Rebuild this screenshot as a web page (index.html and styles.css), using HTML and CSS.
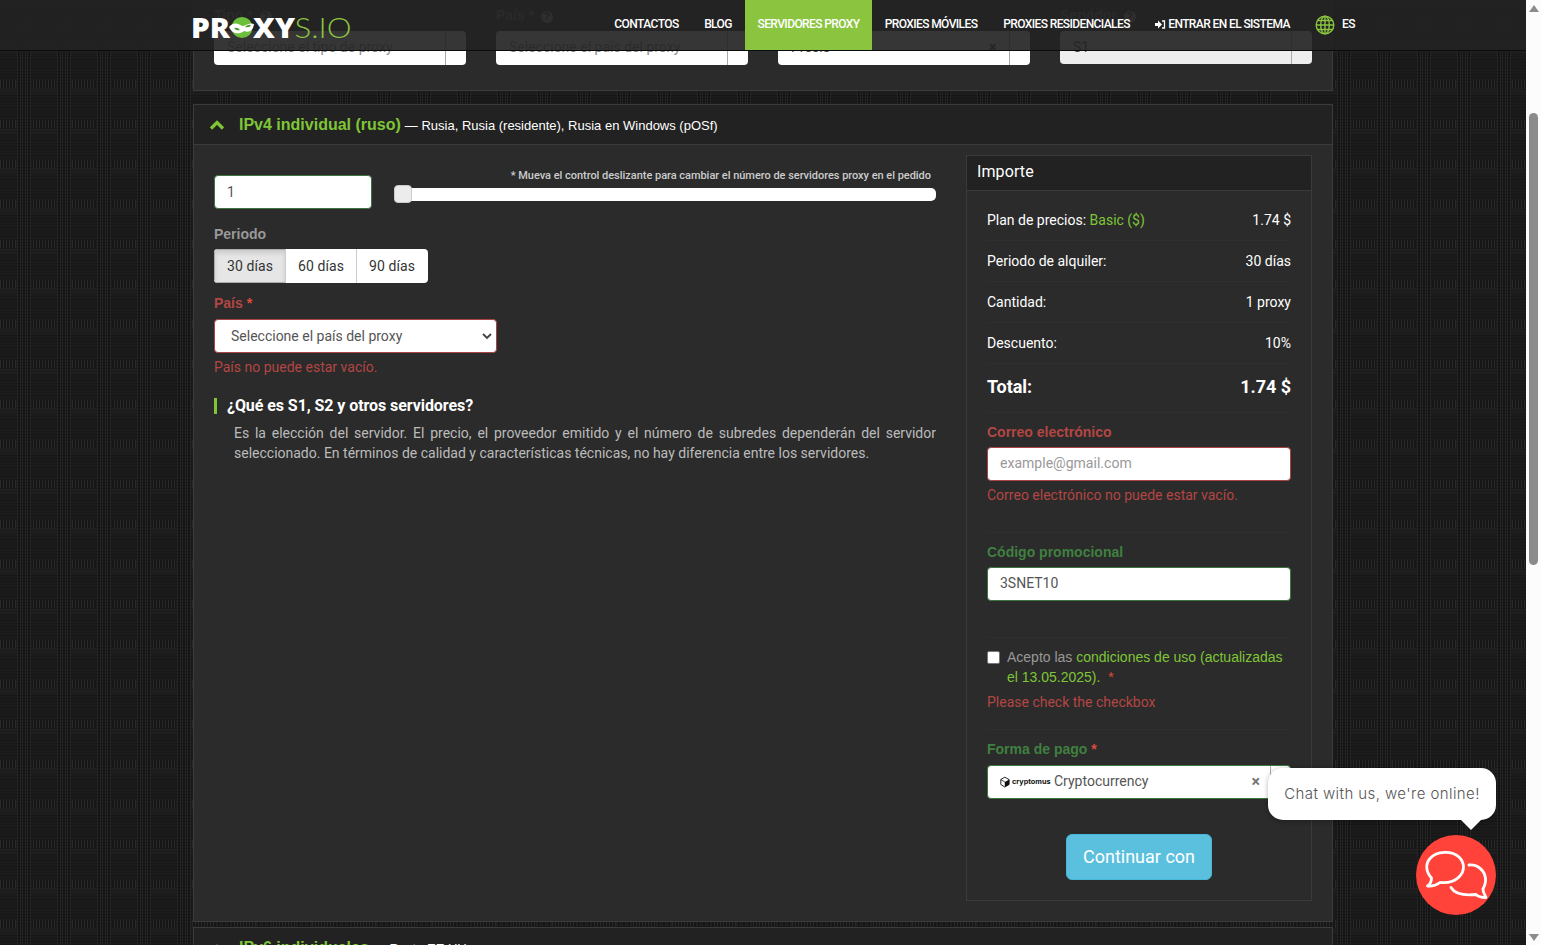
FILE: index.html
```html
<!DOCTYPE html>
<html lang="es">
<head>
<meta charset="utf-8">
<title>PROXYS.IO</title>
<link rel="stylesheet" href="styles.css">
</head>
<body>
<div class="viewport">
  <header class="navbar">
    <div class="navbar-inner">
      <svg class="logo" width="160" height="28" viewBox="0 0 160 28">
        <text class="logo-bold" x="-1" y="24.500" textLength="39" lengthAdjust="spacingAndGlyphs">PR</text>
        <circle cx="50" cy="14.500" r="10.500" fill="#6cbf3a"/>
        <path d="M37 14c4-5 9-4 13-1 4 0 7-4 12-2-1 7-5 9-10 7-5 4-12 3-15-4z" fill="#fff"/>
        <path d="M42 15q4-1 6 2-4 1-6-2zM53 14q3-3 6-2-1 3-6 2z" fill="#4a9a2a"/>
        <text class="logo-bold" x="61" y="24.500" textLength="42" lengthAdjust="spacingAndGlyphs">XY</text>
        <text class="logo-thin" x="102.500" y="24.500" textLength="57" lengthAdjust="spacingAndGlyphs">S.IO</text>
      </svg>
      <nav class="menu">
        <a class="m1">CONTACTOS</a><a class="m2">BLOG</a><a class="m3 active">SERVIDORES PROXY</a><a class="m4">PROXIES MÓVILES</a><a class="m5">PROXIES RESIDENCIALES</a><a class="m6"><svg width="11" height="9" viewBox="0 0 11 9"><path d="M0 3h3V.5L7 4.500 3 8.500V6H0z" fill="#fff"/><path d="M7 1h2.500v7H7" fill="none" stroke="#fff" stroke-width="1.300"/></svg>ENTRAR EN EL SISTEMA</a>
        <a class="lang"><svg width="20" height="20" viewBox="0 0 20 20" fill="none" stroke="#8bc53f" stroke-width="1.400"><circle cx="10" cy="10" r="8.800"/><ellipse cx="10" cy="10" rx="4.300" ry="8.800"/><path d="M10 1v18M1 10h18M2.500 5.500h15M2.500 14.500h15"/></svg>ES</a>
      </nav>
    </div>
  </header>

  <main class="container">
    <section class="panel filters">
      <div class="filter"><label>Tipo * <i>?</i></label><div class="combo"><span>Seleccione el tipo de proxy</span><b></b></div></div>
      <div class="filter"><label>País * <i>?</i></label><div class="combo"><span>Seleccione el país del proxy</span><b></b></div></div>
      <div class="filter"><label>&nbsp;</label><div class="combo dark"><span>Precio</span><em>×</em><b></b></div></div>
      <div class="filter"><label>Servidor <i>?</i></label><div class="combo off dark"><span>S1</span><b></b></div></div>
    </section>

    <section class="panel product">
      <div class="panel-head">
        <svg class="chevron" width="16" height="10" viewBox="0 0 16 10"><path d="M2 8.500L8 2.500l6 6" fill="none" stroke="#7fc637" stroke-width="3.200"/></svg>
        <strong>IPv4 individual (ruso)</strong><span>— Rusia, Rusia (residente), Rusia en Windows (pOSf)</span>
      </div>
      <div class="panel-body">
        <div class="config">
          <div class="qty-row">
            <div class="input qty">1</div>
            <div class="slider-box">
              <p class="slider-note">* Mueva el control deslizante para cambiar el número de servidores proxy en el pedido</p>
              <div class="slider"><span class="handle"></span></div>
            </div>
          </div>
          <div class="label muted">Periodo</div>
          <div class="btn-group"><span class="on">30 días</span><span>60 días</span><span>90 días</span></div>
          <div class="label red country">País <i>*</i></div>
          <div class="input select bad">Seleccione el país del proxy<svg width="10" height="7" viewBox="0 0 10 7"><path d="M1 1l4 4 4-4" fill="none" stroke="#444" stroke-width="1.900"/></svg></div>
          <div class="error">País no puede estar vacío.</div>
          <h4 class="question">¿Qué es S1, S2 y otros servidores?</h4>
          <p class="answer">Es la elección del servidor. El precio, el proveedor emitido y el número de subredes dependerán del servidor seleccionado. En términos de calidad y características técnicas, no hay diferencia entre los servidores.</p>
        </div>
        <aside class="summary">
          <h3>Importe</h3>
          <div class="summary-body">
            <div class="row"><span>Plan de precios: <a>Basic ($)</a></span><span>1.74 $</span></div>
            <div class="row"><span>Periodo de alquiler:</span><span>30 días</span></div>
            <div class="row"><span>Cantidad:</span><span>1 proxy</span></div>
            <div class="row"><span>Descuento:</span><span>10%</span></div>
            <div class="row total"><span>Total:</span><span>1.74 $</span></div>
            <div class="group email"><div class="label red">Correo electrónico</div><div class="input bad placeholder">example@gmail.com</div><div class="error">Correo electrónico no puede estar vacío.</div></div>
            <div class="group promo"><div class="label green">Código promocional</div><div class="input good">3SNET10</div></div>
            <div class="group terms"><div class="check"><span class="box"></span><p>Acepto las <a>condiciones de uso (actualizadas<br>el 13.05.2025).</a> <i>*</i></p></div><div class="error">Please check the checkbox</div></div>
            <div class="group pay"><div class="label green">Forma de pago <i>*</i></div>
              <div class="input good pay-select"><svg width="51" height="12" viewBox="0 0 51 12"><path d="M.8 3.500L4.800 1.200 9 3.500v5L4.800 11 .8 8.500z" fill="none" stroke="#111" stroke-width=".9"/><path d="M4.800 6L9.300 3.500v5L4.800 11z" fill="#111"/><path d="M.8 3.500L4.800 6" stroke="#111" stroke-width=".8"/><text class="crypto" x="12" y="8.300" textLength="38.500" lengthAdjust="spacingAndGlyphs">cryptomus</text></svg><span>Cryptocurrency</span><em>×</em><b></b></div></div>
            <button class="submit">Continuar con</button>
          </div>
        </aside>
      </div>
    </section>

    <section class="panel next">
      <div class="panel-head">
        <svg class="chevron" width="16" height="10" viewBox="0 0 16 10"><path d="M2 8.500L8 2.500l6 6" fill="none" stroke="#7fc637" stroke-width="3.200"/></svg>
        <strong>IPv6 individuales</strong><span>— Resto EE.UU.</span>
      </div>
    </section>
  </main>

  <div class="chat-bubble">Chat with us, we're online!</div>
  <div class="chat-button"><svg width="80" height="80" viewBox="0 0 80 80" fill="none" stroke="#fff" stroke-width="2.800" stroke-linejoin="round" stroke-linecap="round"><path d="M15.500 43C10 37 9 29 14 23.500c7-8 22-8 29-1.500 6 6 6 14 0 20-6 6-13 6-19 5.500-4 3-8 4-12.500 3.500 3-2 4-4 4-8z"/><path d="M53 30c9-1 16 6 16.500 14 .5 4-1 7-2.500 10 0 4 2 6 3 8.500-5 0-8-1-10-3-10 1-21 0-25-7"/></svg></div>

  <div class="scrollbar"><span class="up"></span><span class="thumb"></span><span class="down"></span></div>
</div>
</body>
</html>
```

FILE: styles.css
```css
* { box-sizing: border-box; }
body { margin: 0; font: 14px/20px Roboto, "Liberation Sans", sans-serif; color: #fff; }
i { font-style: normal; color: #e04a3a; }
em { font-style: normal; }
a { color: #7fc637; }
p, h3, h4 { margin: 0; }

.viewport {
  position: relative;
  height: 945px;
  overflow: hidden;
  background-color: #1a1a1a;
  background-image:
    repeating-linear-gradient(0deg, rgba(0,0,0,.16) 0 1px, transparent 1px 3px),
    linear-gradient(90deg, transparent 17px, #252525 17px 18px, #171717 18px 20px, #252525 20px 21px, #171717 21px 22px, #252525 22px 23px, #171717 23px 25px, #252525 25px 26px, #171717 26px 27px, #252525 27px 28px, #171717 28px 30px, #252525 30px 31px, transparent 31px),
    linear-gradient(#1f1f1f 0 14px, #1b1b1b 14px 40px);
  background-size: auto, 40px 40px, 40px 40px;
}
/* short vertical ticks crossing the weave once per tile */
.viewport::before {
  content: "";
  position: absolute;
  inset: 0;
  background: repeating-linear-gradient(90deg, #292929 0 1px, #161616 1px 3px);
  -webkit-mask: linear-gradient(#000 8px, transparent 8px) 0 0 / 40px 40px, linear-gradient(90deg, #000 16px, transparent 16px 32px, #000 32px) 0 0 / 40px 40px;
  -webkit-mask-composite: source-in;
  mask-composite: intersect;
}

.navbar { position: absolute; z-index: 5; top: 0; left: 0; width: 1526px; height: 51px; background: rgba(34,34,34,.91); border-bottom: 1px solid #0b0b0b; }
.navbar-inner { display: flex; width: 1180px; margin-left: 192px; height: 50px; }
.logo { margin-top: 13px; flex: none; overflow: visible; }
.logo-bold { font: 800 28px "Open Sans", sans-serif; fill: #fff; }
.logo-thin { font: 300 28px Lato, sans-serif; fill: #8bc53f; }
.menu { display: flex; margin-left: 250px; font-size: 12px; font-weight: 500; line-height: 48px; letter-spacing: -.6px; white-space: nowrap; }
.menu a { display: flex; align-items: center; justify-content: center; height: 50px; padding-bottom: 2px; color: #fff; }
.menu .active { background: #8bc53f; }
.menu .m1 { width: 89px; letter-spacing: -.55px; }
.m2 { width: 54px; }
.m3 { width: 127px; }
.m4 { width: 118px; }
.m5 { width: 153px; }
.m6 { width: 159px; }
.m6 svg { margin-right: 2px; }
.menu .lang { margin-left: 13px; gap: 7px; }
.lang svg { position: relative; top: 1px; }

.container { position: relative; width: 1140px; margin-left: 193px; }
.panel { border: 1px solid #3b3b3b; background: #2b2b2b; }
.filters { display: flex; gap: 30px; height: 91px; padding: 5px 20px 0; border-top: 0; }
.filter { width: 252px; }
.filter label { display: block; height: 26px; color: #777; font: 700 14px/20px "Liberation Sans", Arial, sans-serif; }
.filter label i { display: inline-block; width: 12px; height: 12px; margin-left: 3px; border-radius: 50%; background: #aaa; color: #222; font-size: 10px; line-height: 12px; text-align: center; }
.combo { display: flex; height: 34px; border-radius: 4px; background: #fff; color: #888; line-height: 32px; }
.combo span { flex: 1; padding-left: 13px; }
.combo b { width: 21px; border-left: 1px solid #aaa; }
.combo em { width: 20px; font-weight: 700; }
.combo.dark { color: #444; }
.combo.off { height: 33px; background: #eee; }

.product { height: 818px; margin-top: 13px; }
.panel-head { display: flex; align-items: center; height: 40px; padding-left: 15px; border-bottom: 1px solid #3b3b3b; background: #222; font-family: "Liberation Sans", Arial, sans-serif; }
.panel-head strong { margin-left: 14px; color: #7fc637; font-size: 16px; }
.panel-head span { margin: 2px 0 0 4px; font-size: 13px; }
.panel-body { display: flex; gap: 30px; padding: 10px 20px; }
.config { width: 722px; }
.input { height: 34px; padding: 0 12px; border: 1px solid #3c763d; border-radius: 4px; background: #fff; color: #555; line-height: 32px; }
.input.bad { border-color: #a94442; }
.qty-row { display: flex; gap: 22px; padding-top: 20px; }
.qty { width: 158px; }
.slider-box { width: 542px; margin-top: -10px; }
.slider-note { position: relative; top: 1px; padding-right: 5px; color: #ccc; font-size: 11px; font-weight: 500; text-align: right; letter-spacing: -.03px; }
.slider { height: 13px; margin-top: 3px; border-radius: 5px; background: #fff; }
.handle { display: block; position: relative; top: -3px; width: 18px; height: 18px; border: 1px solid #ccc; border-radius: 4px; background: #ececec; }
.label { height: 25px; font: 700 14px/20px "Liberation Sans", Arial, sans-serif; }
.muted { margin-top: 15px; color: #999; }
.red, .error { color: #b34643; }
.green { color: #3f8040; }
.btn-group { display: flex; width: 214px; height: 34px; overflow: hidden; border-radius: 4px; background: #fff; color: #333; line-height: 34px; text-align: center; letter-spacing: .1px; }
.btn-group span { width: 71px; border-left: 1px solid #ccc; }
.btn-group .on { border: 1px solid #adadad; border-right: 0; background: #e6e6e6; box-shadow: inset 0 3px 5px rgba(0,0,0,.125); line-height: 32px; }
.country { height: 26px; margin-top: 10px; }
.select { display: flex; align-items: center; justify-content: space-between; width: 283px; padding: 0 4px 0 16px; }
.error { margin-top: 4px; }
.question { height: 16px; margin-top: 21px; padding-left: 10px; border-left: 3px solid #7fc637; font-size: 16px; line-height: 15px; letter-spacing: -.07px; }
.answer { margin: 9px 0 0 20px; color: #bbb; text-align: justify; }

.summary { width: 346px; height: 746px; border: 1px solid #3b3b3b; }
.summary h3 { height: 35px; padding-left: 10px; border-bottom: 1px solid #3b3b3b; background: #222; font-size: 16px; font-weight: 400; line-height: 32px; letter-spacing: .1px; }
.summary-body { padding: 9px 20px 0; }
.row { display: flex; justify-content: space-between; height: 41px; border-bottom: 1px solid #2f2f2f; line-height: 40px; }
.total { height: 58px; font-size: 18px; font-weight: 700; letter-spacing: -.05px; line-height: 46px; }
.group { position: relative; }
.group::before { content: ""; position: absolute; left: 0; right: 0; top: -10px; height: 1px; background: #2f2f2f; }
.summary .total { border-bottom: 0; }
.summary .input { width: 304px; }
.placeholder { color: #999; letter-spacing: .02px; line-height: 30px; }
.input.good { line-height: 30px; }
.email { height: 120px; }
.promo { height: 105px; }
.terms { height: 92px; }
.check { display: flex; gap: 7px; color: #999; font-family: "Liberation Sans", Arial, sans-serif; white-space: nowrap; }
.box { flex: none; width: 13px; height: 13px; margin-top: 4px; border: 1px solid #777; border-radius: 2px; background: #fff; }
.check i { margin-left: 4px; }
.terms .error { margin-top: 5px; }
.pay { height: 95px; }
.pay .label { height: 26px; }
.pay-select { display: flex; align-items: center; padding-right: 0; }
.pay-select span { margin: -3px auto 0 3px; }
.pay-select em { margin-right: 10px; color: #777; font-size: 16px; font-weight: 700; }
.pay-select b { width: 20px; height: 32px; border-left: 1px solid #aaa; }
.crypto { font: 700 7px Inter, sans-serif; fill: #111; }
.submit { display: block; width: 146px; height: 46px; margin: 0 auto; padding: 0; border: 1px solid #46b8da; border-radius: 6px; background: #5bc0de; color: #fff; font: 400 18px/44px Roboto, sans-serif; }

.next { height: 60px; margin-top: 5px; }
.next .chevron { margin-top: 2px; }

.chat-bubble { position: absolute; z-index: 6; left: 1268px; top: 768px; width: 228px; height: 52px; border-radius: 15px; background: #fff; color: #555; font: 300 15px/52px Inter, sans-serif; letter-spacing: .42px; text-align: center; box-shadow: 0 1px 5px rgba(0,0,0,.3); white-space: nowrap; }
.chat-bubble::after { content: ""; position: absolute; right: 14px; top: 51px; border: 11px solid transparent; border-top-color: #fff; border-bottom: 0; }
.chat-button { position: absolute; z-index: 6; left: 1416px; top: 835px; width: 80px; height: 80px; border-radius: 50%; background: #ff433b; }
.chat-button svg { display: block; }

.scrollbar { position: absolute; z-index: 7; right: 0; top: 0; display: flex; flex-direction: column; align-items: center; width: 15px; height: 945px; background: #fcfcfc; }
.up, .down { border: 5px solid transparent; }
.up { margin-top: 5px; border-top: 0; border-bottom: 7px solid #8b8b8b; }
.thumb { width: 9px; height: 452px; margin-top: 101px; border-radius: 5px; background: #8b8b8b; }
.down { margin-top: auto; margin-bottom: 4px; border-bottom: 0; border-top: 7px solid #8b8b8b; }
```
